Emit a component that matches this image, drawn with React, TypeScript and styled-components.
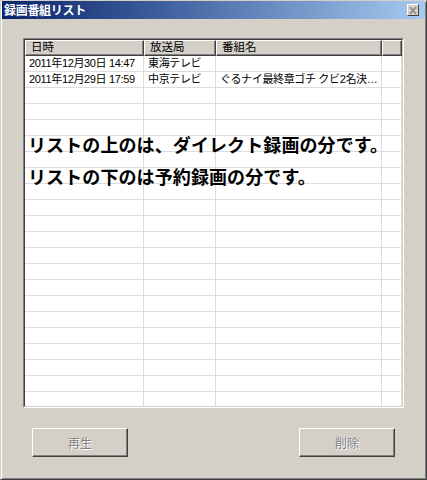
import React from "react";
import styled, { createGlobalStyle } from "styled-components";

const Global = createGlobalStyle`
  html, body { margin: 0; padding: 0; background: #d4d0c8; }
  body { width: 427px; height: 480px; overflow: hidden; }
`;

const UI_FONT = `"Liberation Sans", "Noto Sans CJK JP", sans-serif`;

const Window = styled.div`
  box-sizing: border-box;
  width: 427px;
  height: 480px;
  background: #d4d0c8;
  border-top: 1px solid #d4d0c8;
  border-left: 1px solid #d4d0c8;
  border-right: 1px solid #404040;
  border-bottom: 1px solid #404040;
  box-shadow: inset 1px 1px 0 #ffffff, inset -1px -1px 0 #808080;
  display: flex;
  flex-direction: column;
  font-family: ${UI_FONT};
`;

const TitleBar = styled.div`
  height: 18px;
  margin: 0 1px 0 1px;
  background: linear-gradient(to right, #0a246a 0%, #3a5a9a 35%, #a6caf0 100%);
  display: flex;
  align-items: center;
  justify-content: space-between;
  padding: 0 6px 0 2px;
`;

const TitleText = styled.span`
  color: #ffffff;
  font-family: "Noto Sans CJK JP", sans-serif;
  font-weight: 700;
  font-size: 12px;
  line-height: 18px;
  letter-spacing: -0.3px;
`;

const CloseBtn = styled.div`
  box-sizing: border-box;
  width: 12px;
  height: 12px;
  background: #d4d0c8;
  border-top: 1px solid #ffffff;
  border-left: 1px solid #ffffff;
  border-right: 1px solid #404040;
  border-bottom: 1px solid #404040;
  display: flex;
  align-items: center;
  justify-content: center;
`;

const Body = styled.div`
  flex: 1;
  display: flex;
  flex-direction: column;
  padding: 19px 23px 0 22px;
`;

const ListView = styled.div`
  position: relative;
  box-sizing: border-box;
  width: 381px;
  height: 370px;
  border-top: 1px solid #808080;
  border-left: 1px solid #808080;
  border-right: 1px solid #ffffff;
  border-bottom: 1px solid #ffffff;
  overflow: hidden;
`;

const ListInner = styled.div`
  box-sizing: border-box;
  height: 100%;
  border-top: 1px solid #404040;
  border-left: 1px solid #404040;
  border-right: 1px solid #d4d0c8;
  border-bottom: 1px solid #d4d0c8;
  background: #ffffff;
`;

const COLS = "119px 72px 166px 1fr";

const HeaderRow = styled.div`
  display: grid;
  grid-template-columns: ${COLS};
  height: 16px;
`;

const HeaderCell = styled.div`
  box-sizing: border-box;
  background: #d4d0c8;
  border-top: 1px solid #ffffff;
  border-left: 1px solid #ffffff;
  border-right: 1px solid #404040;
  border-bottom: 1px solid #404040;
  box-shadow: inset -1px -1px 0 #808080;
  font-size: 11.5px;
  line-height: 13px;
  padding-left: 5px;
  color: #000;
  white-space: nowrap;
  overflow: hidden;
`;

const Row = styled.div`
  display: grid;
  grid-template-columns: ${COLS};
  height: 16px;
`;

const Cell = styled.div`
  box-sizing: border-box;
  border-right: 1px solid #dcdcdc;
  border-bottom: 1px solid #dcdcdc;
  font-size: 11px;
  line-height: 15px;
  letter-spacing: -0.35px;
  padding-left: 4px;
  color: #000;
  white-space: nowrap;
  overflow: hidden;
`;

const Notice = styled.div`
  position: absolute;
  left: 4px;
  top: 93px;
  display: flex;
  flex-direction: column;
  gap: 8px;
  pointer-events: none;
`;

const NoticeLine = styled.div`
  font-family: "Noto Sans CJK JP", sans-serif;
  font-weight: 700;
  font-size: 18px;
  line-height: 24px;
  color: #000;
  white-space: nowrap;
  letter-spacing: 0.1px;
`;

const ButtonRow = styled.div`
  display: flex;
  justify-content: space-between;
  padding: 20px 8px 0 9px;
`;

const Button = styled.button`
  box-sizing: border-box;
  width: 96px;
  height: 29px;
  background: #d4d0c8;
  border-top: 1px solid #ffffff;
  border-left: 1px solid #ffffff;
  border-right: 1px solid #404040;
  border-bottom: 1px solid #404040;
  box-shadow: inset -1px -1px 0 #808080;
  font-family: ${UI_FONT};
  font-size: 12px;
  color: #808080;
  text-shadow: 1px 1px 0 #ffffff;
  padding: 0;
`;

const rows = [
  ["2011年12月30日 14:47", "東海テレビ", "", ""],
  ["2011年12月29日 17:59", "中京テレビ", "ぐるナイ最終章ゴチ クビ2名決…", ""],
];

export default function App() {
  const all = [...rows];
  while (all.length < 22) all.push(["", "", "", ""]);
  return (
    <>
      <Global />
      <Window>
        <TitleBar>
          <TitleText>録画番組リスト</TitleText>
          <CloseBtn>
            <svg width="8" height="7" viewBox="0 0 8 7">
              <path d="M1 0 L7 7 M7 0 L1 7" stroke="#808080" strokeWidth="1.3" />
            </svg>
          </CloseBtn>
        </TitleBar>
        <Body>
          <ListView>
            <ListInner>
              <HeaderRow>
                <HeaderCell>日時</HeaderCell>
                <HeaderCell>放送局</HeaderCell>
                <HeaderCell>番組名</HeaderCell>
                <HeaderCell />
              </HeaderRow>
              {all.map((r, i) => (
                <Row key={i}>
                  {r.map((c, j) => (
                    <Cell key={j}>{c}</Cell>
                  ))}
                </Row>
              ))}
            </ListInner>
            <Notice>
              <NoticeLine>リストの上のは、ダイレクト録画の分です。</NoticeLine>
              <NoticeLine>リストの下のは予約録画の分です。</NoticeLine>
            </Notice>
          </ListView>
          <ButtonRow>
            <Button disabled>再生</Button>
            <Button disabled>削除</Button>
          </ButtonRow>
        </Body>
      </Window>
    </>
  );
}
